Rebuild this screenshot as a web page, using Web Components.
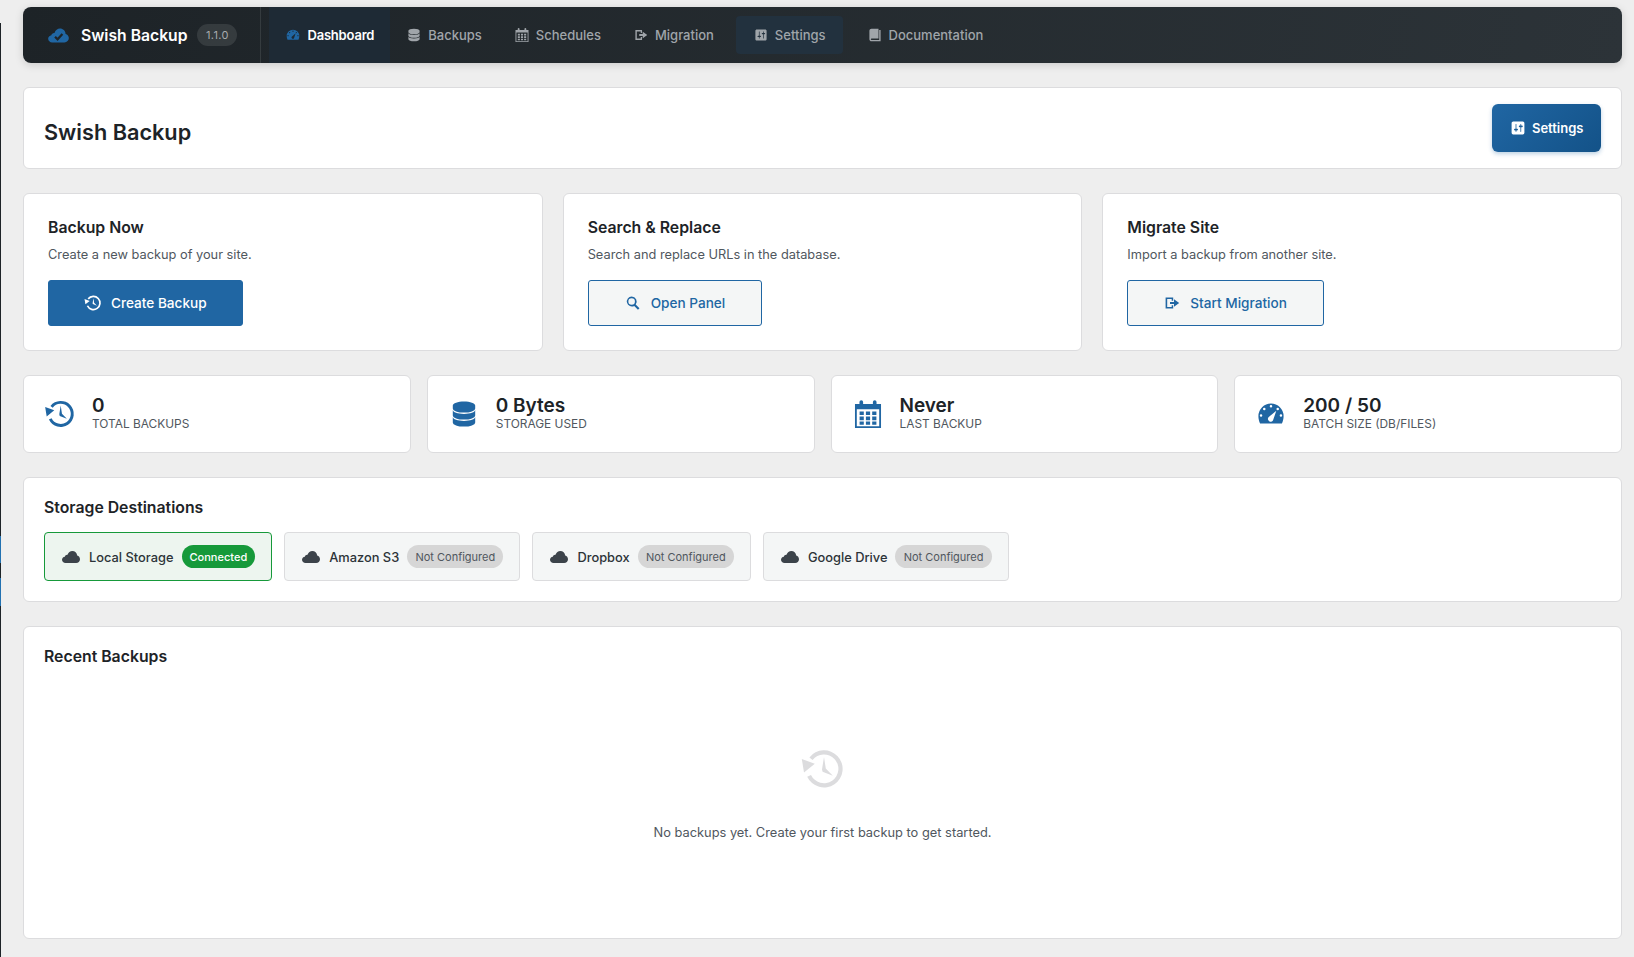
<!DOCTYPE html>
<html>
<head>
<meta charset="utf-8">
<title>Swish Backup</title>
<style>
    html, body { margin: 0; padding: 0; }
    body {
        background: #eeeeee;
        color: #1d2327;
        font-family: Inter, "Liberation Sans", sans-serif;
        display: flex;
        min-height: 957px;
        box-sizing: border-box;
        overflow: hidden;
    }
</style>
</head>
<body>
<sw-sliver></sw-sliver>
<sw-page>
    <sw-nav slot="nav" version="1.1.0">
        <sw-nav-item icon="dashboard" active>Dashboard</sw-nav-item>
        <sw-nav-item icon="database">Backups</sw-nav-item>
        <sw-nav-item icon="calendar">Schedules</sw-nav-item>
        <sw-nav-item icon="migrate">Migration</sw-nav-item>
        <sw-nav-item icon="settings" current>Settings</sw-nav-item>
        <sw-nav-item icon="book">Documentation</sw-nav-item>
    </sw-nav>

    <sw-title-card heading="Swish Backup">
        <sw-button variant="head" icon="settings">Settings</sw-button>
    </sw-title-card>

    <sw-grid cols="3">
        <sw-action heading="Backup Now" text="Create a new backup of your site.">
            <sw-button variant="primary" icon="backup">Create Backup</sw-button>
        </sw-action>
        <sw-action heading="Search &amp; Replace" text="Search and replace URLs in the database.">
            <sw-button variant="secondary" icon="search">Open Panel</sw-button>
        </sw-action>
        <sw-action heading="Migrate Site" text="Import a backup from another site.">
            <sw-button variant="secondary" icon="migrate">Start Migration</sw-button>
        </sw-action>
    </sw-grid>

    <sw-grid cols="4">
        <sw-stat icon="backup" value="0" label="Total Backups"></sw-stat>
        <sw-stat icon="database" value="0 Bytes" label="Storage Used"></sw-stat>
        <sw-stat icon="calendar" value="Never" label="Last Backup"></sw-stat>
        <sw-stat icon="dashboard" value="200 / 50" label="Batch Size (DB/Files)"></sw-stat>
    </sw-grid>

    <sw-panel heading="Storage Destinations">
        <sw-dests>
            <sw-dest name="Local Storage" status="Connected" connected></sw-dest>
            <sw-dest name="Amazon S3" status="Not Configured"></sw-dest>
            <sw-dest name="Dropbox" status="Not Configured"></sw-dest>
            <sw-dest name="Google Drive" status="Not Configured"></sw-dest>
        </sw-dests>
    </sw-panel>

    <sw-panel heading="Recent Backups">
        <sw-empty icon="backup">No backups yet. Create your first backup to get started.</sw-empty>
    </sw-panel>
</sw-page>

<script>
    // dashicon style glyphs, all on a 20 box
    var ICONS = {
        cloud: 'M4.5 16C2.6 16 1 14.6 1 12.8c0-1.6 1.2-2.9 2.8-3.1C4.1 8.5 5.2 7.6 6.5 7.8 7.3 5.5 9.2 4 11.3 4c2.6 0 4.7 2 4.9 4.6 1.6.4 2.8 1.9 2.8 3.6 0 2.1-1.7 3.8-3.8 3.8z',
        dashboard: 'M10 2.5a9 9 0 0 0-9 9c0 1.9.4 3.7 1.2 5.3h15.6c.8-1.6 1.2-3.4 1.2-5.3a9 9 0 0 0-9-9zM10 3.6a.9.9 0 1 1 0 1.8.9.9 0 0 1 0-1.8zM5.2 5.6a.9.9 0 1 1 0 1.8.9.9 0 0 1 0-1.8zM14.8 5.6a.9.9 0 1 1 0 1.8.9.9 0 0 1 0-1.8zM2.9 10.1a.9.9 0 1 1 0 1.8.9.9 0 0 1 0-1.8zM17.1 10.1a.9.9 0 1 1 0 1.8.9.9 0 0 1 0-1.8zM8.2 12.4 13.8 7.6 11.4 14.6a1.8 1.8 0 0 1-3.2-2.2z',
        database: 'M2 4c0-1.7 3.6-3 8-3s8 1.3 8 3v2c0 1.7-3.6 3-8 3S2 7.7 2 6zM2 7.2c0 1.6 3.6 2.8 8 2.8s8-1.2 8-2.8V11c0 1.7-3.6 3-8 3s-8-1.3-8-3zM2 12.2c0 1.6 3.6 2.8 8 2.8s8-1.2 8-2.8V16c0 1.7-3.6 3-8 3s-8-1.3-8-3z',
        calendar: 'M.7 2.8h3.2V1.4a1.3 1.3 0 0 1 2.6 0v1.4h7V1.4a1.3 1.3 0 0 1 2.6 0v1.4h3.2V20H.7zM2 6.6V18.8h16V6.6zM4 8.2h3v2.6H4zM8.5 8.2h3v2.6h-3zM13 8.2h3v2.6h-3zM4 11.8h3v2.6H4zM8.5 11.8h3v2.6h-3zM13 11.8h3v2.6h-3zM4 15.3h3v2.3H4zM8.5 15.3h3v2.3h-3zM13 15.3h3v2.3h-3z',
        migrate: 'M2 3h9.5v4.2H9.6V5H4v10h5.6v-2.2h1.9V17H2zM7.5 8.6h5V5.4l6.5 4.6-6.5 4.6v-3.2h-5z',
        settings: 'M18 16V4c0-1.1-.9-2-2-2H4c-1.1 0-2 .9-2 2v12c0 1.1.9 2 2 2h12c1.1 0 2-.9 2-2zM8 11h1c.55 0 1 .45 1 1s-.45 1-1 1H8v1.5c0 .28-.22.5-.5.5s-.5-.22-.5-.5V13H6c-.55 0-1-.45-1-1s.45-1 1-1h1V5.5c0-.28.22-.5.5-.5s.5.22.5.5V11zm5-2h-1c-.55 0-1-.45-1-1s.45-1 1-1h1V5.5c0-.28.22-.5.5-.5s.5.22.5.5V7h1c.55 0 1 .45 1 1s-.45 1-1 1h-1v5.5c0 .28-.22.5-.5.5s-.5-.22-.5-.5V9z',
        book: 'M16 3h2v16H5c-1.66 0-3-1.34-3-3V4c0-1.66 1.34-3 3-3h10v14H5c-.55 0-1 .45-1 1s.45 1 1 1h11V3z',
        backup: 'M3.2 4.2A9.3 9.3 0 1 1 2.1 13.9L4 13A7.2 7.2 0 1 0 4.8 5.5zM-.6 5 5.9 7.4 .5 11.7zM10.5 4 11.4 9.8 14.9 13.4 9.8 11.4 9.5 10.2z',
        search: 'M8.3 1.8a6.3 6.3 0 0 1 5.1 10l4.7 4.7-1.9 1.9-4.7-4.7A6.3 6.3 0 1 1 8.3 1.8zm0 2.2a4.1 4.1 0 1 0 0 8.2 4.1 4.1 0 0 0 0-8.2z'
    };

    function svg(name, size) {
        return '<svg width="' + size + '" height="' + size + '" viewBox="0 0 20 20" fill="currentColor" style="display:block;flex:none;overflow:visible"><path fill-rule="evenodd" d="' + ICONS[name] + '"></path></svg>';
    }

    function define(tag, css, html) {
        customElements.define(tag, class extends HTMLElement {
            constructor() {
                super();
                var shadowRoot = this.attachShadow({mode: 'open'});
                shadowRoot.innerHTML = '<style>' + css + '</style>' + html(this);
            }
        });
    }

    var attr = function (el, name) { return el.getAttribute(name) || ''; };

    var CARD = 'background:#fff;border:1px solid #dcdcde;border-radius:6px;box-sizing:border-box;';

    define('sw-sliver', `
        :host {
            display: block;
            flex: none;
            width: 1px;
            margin-top: 23px;
            background: linear-gradient(#1d2327 0 513px, #2271b1 513px 540px, #1d2327 540px 555px, #2271b1 555px 583px, #1d2327 583px);
        }
    `, function () { return ''; });

    define('sw-page', `
        :host {
            display: flex;
            flex-direction: column;
            flex: 1;
            min-width: 0;
            padding: 7px 12px 19px 22px;
        }
        .stack { display: flex; flex-direction: column; gap: 24px; margin-top: 24px; }
    `, function () {
        return '<slot name="nav"></slot><div class="stack"><slot></slot></div>';
    });

    define('sw-nav', `
        :host {
            display: flex;
            height: 56px;
            border-radius: 8px;
            background: linear-gradient(100deg, #1d2327, #2c3338);
            box-shadow: 0 2px 8px rgba(0,0,0,.15);
            color: #fff;
            overflow: hidden;
        }
        .brand {
            display: flex;
            align-items: center;
            padding: 0 23px 0 24px;
            border-right: 1px solid rgba(255,255,255,.1);
            flex: none;
        }
        .logo { color: #2066a3; position: relative; margin-right: 11px; }
        .logo svg.tick { position: absolute; inset: 0; }
        .name { font-size: 15.7px; font-weight: 600; line-height: 1; padding-top: 1px; margin-right: 10px; white-space: nowrap; }
        .ver {
            height: 22px;
            padding: 0 8.5px;
            display: flex;
            align-items: center;
            border-radius: 11px;
            background: rgba(255,255,255,.1);
            color: #a7aaad;
            font-size: 11px;
            letter-spacing: .4px;
        }
        nav { display: flex; align-items: center; margin-left: 8px; }
    `, function (el) {
        return '<div class="brand"><div class="logo">' + svg('cloud', 23) +
            '<svg class="tick" width="23" height="23" viewBox="0 0 20 20" fill="none" stroke="#1e2428" stroke-width="1.9"><path d="M7 11l2.2 2.3 4.2-4.6"></path></svg></div>' +
            '<span class="name">Swish Backup</span><span class="ver">' + attr(el, 'version') + '</span></div><nav><slot></slot></nav>';
    });

    define('sw-nav-item', `
        :host {
            display: flex;
            align-items: center;
            gap: 6px;
            height: 56px;
            box-sizing: border-box;
            padding: 0 16px;
            font-size: 13px;
            font-weight: 500;
            color: #a0a5aa;
            white-space: nowrap;
        }
        .ic { width: 16px; display: flex; justify-content: center; }
        :host([active]) { background: #1e2a35; color: #fff; font-weight: 600; letter-spacing: -.2px; }
        :host([active]) .ic { color: #2066a3; }
        :host([current]) {
            height: 38px;
            border-radius: 4px;
            background: #22313e;
            padding: 0 17px;
            margin-left: 6px;
            margin-right: 8px;
        }
    `, function (el) {
        return '<span class="ic">' + svg(attr(el, 'icon'), 14) + '</span><slot></slot>';
    });

    define('sw-title-card', `
        :host {
            ${CARD}
            display: flex;
            align-items: center;
            justify-content: space-between;
            padding: 16px 20px;
        }
        h1 { margin: 0; padding-top: 8px; font-size: 21.7px; font-weight: 600; line-height: 1.2; }
    `, function (el) {
        return '<h1>' + attr(el, 'heading') + '</h1><slot></slot>';
    });

    define('sw-grid', `
        :host { display: grid; gap: 20px; }
        :host([cols="3"]) { grid-template-columns: repeat(3, 1fr); }
        :host([cols="4"]) { grid-template-columns: repeat(4, 1fr); gap: 16px; }
    `, function () { return '<slot></slot>'; });

    define('sw-action', `
        :host { ${CARD} display: block; padding: 25px 24px 24px; }
        h3 { margin: 0 0 8px; font-size: 15.8px; font-weight: 600; line-height: 18px; }
        p { margin: 0 0 15px; font-size: 12.8px; line-height: 20px; color: #50575e; }
    `, function (el) {
        return '<h3>' + attr(el, 'heading') + '</h3><p>' + attr(el, 'text') + '</p><slot></slot>';
    });

    define('sw-button', `
        :host {
            display: inline-flex;
            align-items: center;
            gap: 10px;
            height: 46px;
            box-sizing: border-box;
            padding: 0 36px;
            border: 1px solid #2066a3;
            border-radius: 3px;
            font-size: 13.6px;
            font-weight: 500;
            white-space: nowrap;
            vertical-align: top;
        }
        :host([variant="primary"]) { background: #2066a3; color: #fff; padding-right: 35px; }
        :host([variant="secondary"]) { background: #f4f6f6; color: #2066a3; }
        :host([variant="head"]) {
            height: 48px;
            padding: 0 17.5px;
            gap: 6px;
            border: 0;
            border-radius: 6px;
            background: linear-gradient(135deg, #2066a3, #135288);
            box-shadow: 0 2px 4px rgba(32,102,163,.3);
            color: #fff;
            font-size: 13px;
            font-weight: 600;
        }
    `, function (el) {
        return svg(attr(el, 'icon'), 16) + '<slot></slot>';
    });

    define('sw-stat', `
        :host {
            ${CARD}
            display: flex;
            align-items: center;
            gap: 16px;
            padding: 18px 20px 20px;
        }
        .ic { width: 32px; display: flex; justify-content: center; color: #2066a3; margin-top: 2px; }
        .val { font-size: 19px; font-weight: 600; line-height: 24px; }
        .lab { font-size: 11.9px; line-height: 16px; margin-top: -2px; color: #50575e; text-transform: uppercase; }
    `, function (el) {
        return '<div class="ic">' + svg(attr(el, 'icon'), 28) + '</div><div><div class="val">' + attr(el, 'value') +
            '</div><div class="lab">' + attr(el, 'label') + '</div></div>';
    });

    define('sw-panel', `
        :host { ${CARD} display: block; padding: 20px; }
        h2 { margin: 0 0 15px; padding-top: 1px; font-size: 15.8px; font-weight: 600; line-height: 18px; }
    `, function (el) {
        return '<h2>' + attr(el, 'heading') + '</h2><slot></slot>';
    });

    define('sw-dests', `
        :host { display: flex; gap: 12px; }
    `, function () { return '<slot></slot>'; });

    define('sw-dest', `
        :host {
            display: flex;
            align-items: center;
            height: 49px;
            box-sizing: border-box;
            padding: 0 16px;
            gap: 8px;
            background: #f4f6f6;
            border: 1px solid #dcdcde;
            border-radius: 4px;
            font-size: 12.85px;
            font-weight: 500;
            color: #2c3338;
            white-space: nowrap;
        }
        :host([connected]) { background: #edf5ef; border-color: #16993a; }
        .ic { color: #3c434a; }
        .nm { padding-top: 1px; }
        .badge {
            height: 23px;
            display: flex;
            align-items: center;
            padding: 0 8.2px;
            border-radius: 12px;
            background: #d6d6d6;
            color: #50575e;
            font-size: 11px;
            font-weight: 400;
        }
        :host([connected]) .badge { background: #16993a; color: #fff; font-weight: 500; padding: 0 8px; }
    `, function (el) {
        return '<span class="ic">' + svg('cloud', 20) + '</span><span class="nm">' + attr(el, 'name') + '</span><span class="badge">' + attr(el, 'status') + '</span>';
    });

    define('sw-empty', `
        :host {
            display: flex;
            flex-direction: column;
            align-items: center;
            padding: 68px 0 75px;
            font-size: 12.85px;
            line-height: 20px;
            color: #50575e;
        }
        .ic { color: #dcdcde; margin-bottom: 34px; }
    `, function (el) {
        return '<div class="ic">' + svg(attr(el, 'icon'), 40) + '</div><slot></slot>';
    });
</script>
</body>
</html>
